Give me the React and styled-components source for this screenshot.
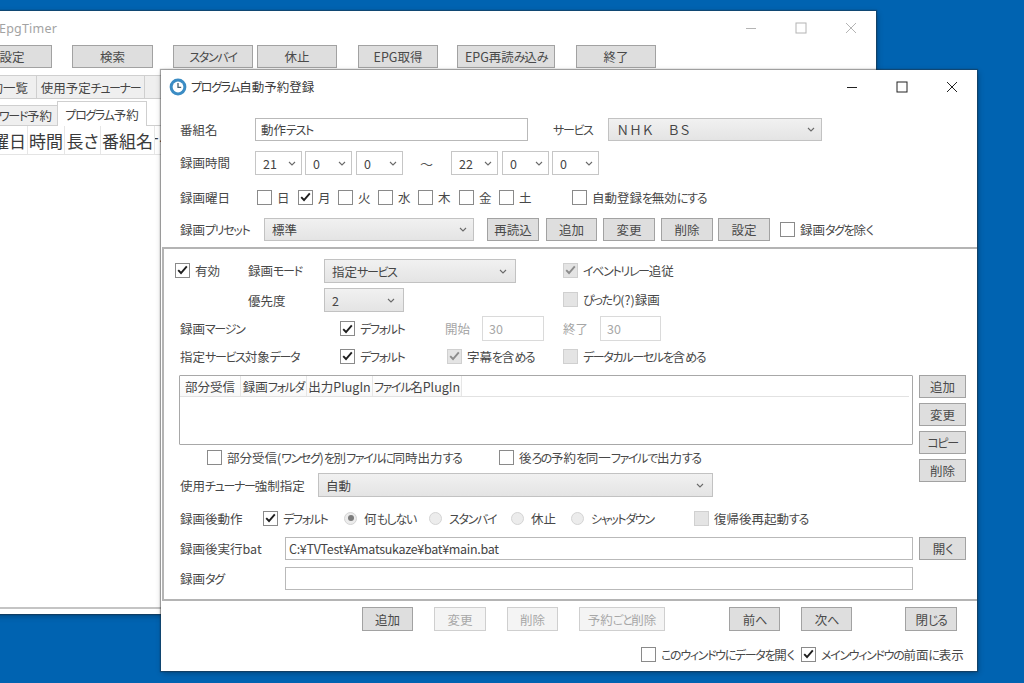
import React from 'react';
import styled, { createGlobalStyle } from 'styled-components';

const Global = createGlobalStyle`
  html, body { margin: 0; padding: 0; width: 1024px; height: 683px; overflow: hidden; background: #0063b1; }
  #root { width: 1024px; height: 683px; }
  * { box-sizing: border-box; }
`;

const Desktop = styled.div`
  position: relative;
  width: 1024px;
  height: 683px;
  overflow: hidden;
  background: #0063b1;
  font-family: "Noto Sans CJK JP", "Noto Sans", sans-serif;
  font-feature-settings: "palt" 1;
  font-size: 12.5px;
  color: #444;
`;

/* Kana run: narrower than the kanji around it, as in the UI font of the screenshot */
const K = styled.span`
  font-size: 0.96em;
  letter-spacing: -0.11em;
`;

const Window = styled.div`
  position: absolute;
  left: ${p => p.$x}px;
  top: ${p => p.$y}px;
  width: ${p => p.$w}px;
  height: ${p => p.$h}px;
  background: #fff;
  display: flex;
  flex-direction: column;
  box-shadow: 0 0 1px 1px rgba(40, 40, 40, 0.4), 1px 2px 6px rgba(0, 0, 0, 0.3);
`;

const TitleBar = styled.div`
  flex: none;
  height: ${p => p.$h}px;
  display: flex;
  align-items: center;
  padding-left: ${p => p.$pl}px;
`;

const AppTitle = styled.span`
  font-family: "Noto Sans", sans-serif;
  font-size: 12.5px;
  color: #a3a3a3;
  letter-spacing: 0.2px;
`;

const DialogTitle = styled.span`
  font-size: 12.5px;
  margin-left: 4px;
  color: #3a3a3a;
`;

const Controls = styled.div`
  margin-left: auto;
  display: flex;
  color: ${p => (p.$dim ? '#b4b4b4' : '#222')};
`;

const ControlCell = styled.div`
  width: 50px;
  height: 24px;
  display: flex;
  align-items: center;
  justify-content: center;
`;

const Row = styled.div`
  flex: none;
  display: flex;
  align-items: center;
  height: ${p => p.$h}px;
  margin-top: ${p => p.$mt || 0}px;
  padding-left: ${p => p.$pl || 0}px;
`;

const Label = styled.span`
  flex: none;
  width: ${p => (p.$w ? `${p.$w}px` : 'auto')};
  margin-left: ${p => p.$ml || 0}px;
  margin-bottom: ${p => (p.$up ? 2 : 0)}px;
  white-space: nowrap;
  color: ${p => (p.$muted ? '#a6a6a6' : '#484848')};
`;

const Wave = styled.span`
  flex: none;
  width: 31px;
  margin-left: 17px;
  font-size: 13px;
  color: #555;
`;

const Button = styled.div`
  flex: none;
  width: ${p => p.$w}px;
  height: ${p => p.$h || 23}px;
  margin-left: ${p => p.$ml || 0}px;
  margin-top: ${p => p.$mt || 0}px;
  display: flex;
  align-items: center;
  justify-content: center;
  white-space: nowrap;
  background: ${p => (p.$off ? '#f4f4f4' : '#dedede')};
  border: 1px solid ${p => (p.$off ? '#cfcfcf' : '#a2a2a2')};
  color: ${p => (p.$off ? '#a8a8a8' : '#4a4a4a')};
`;

const Field = styled.div`
  flex: none;
  width: ${p => p.$w}px;
  height: ${p => p.$h || 23}px;
  display: flex;
  align-items: center;
  padding-left: ${p => p.$pad || 6}px;
  letter-spacing: ${p => p.$ls || 0}px;
  background: #fff;
  white-space: pre;
  border: 1px solid ${p => (p.$off ? '#dadada' : '#b9b9b9')};
  color: ${p => (p.$off ? '#a8a8a8' : '#444')};
`;

const Combo = styled.div`
  flex: none;
  width: ${p => p.$w}px;
  height: ${p => p.$h || 24}px;
  margin-left: ${p => p.$ml || 0}px;
  letter-spacing: ${p => p.$ls || 0}px;
  display: flex;
  align-items: center;
  justify-content: space-between;
  padding: 0 ${p => p.$pr || 8}px 0 ${p => p.$pad || 7}px;
  white-space: pre;
  background: ${p => (p.$edit ? '#fff' : 'linear-gradient(#f1f1f1, #e4e4e4)')};
  border: 1px solid ${p => (p.$edit ? '#c6c6c6' : '#c2c2c2')};
  color: #454545;
`;

const Chevron = () => (
  <svg width="8" height="5" viewBox="0 0 8 5" fill="none" stroke="#6a6a6a" strokeWidth="1.1">
    <path d="M1 1 L4 4 L7 1" />
  </svg>
);

const Select = ({ children, ...rest }) => (
  <Combo {...rest}>
    <span>{children}</span>
    <Chevron />
  </Combo>
);

const CheckWrap = styled.span`
  flex: none;
  display: flex;
  align-items: center;
  width: ${p => (p.$w ? `${p.$w}px` : 'auto')};
  margin-left: ${p => p.$ml || 0}px;
  margin-bottom: ${p => (p.$up ? 2 : 0)}px;
  white-space: nowrap;
  color: #484848;
`;

const Box = styled.span`
  flex: none;
  width: 15px;
  height: 15px;
  margin-right: 5px;
  display: flex;
  align-items: center;
  justify-content: center;
  background: ${p => (p.$off ? '#e4e4e4' : '#fff')};
  border: 1px solid ${p => (p.$off ? '#d0d0d0' : '#8a8a8a')};
`;

const Check = ({ on, off, w, ml, up, children }) => (
  <CheckWrap $w={w} $ml={ml} $up={up}>
    <Box $off={off}>
      {on && (
        <svg width="11" height="10" viewBox="0 0 11 10" fill="none" stroke={off ? '#8c8c8c' : '#1e1e1e'} strokeWidth="1.9">
          <path d="M1.2 5.2 L4 8 L9.8 1.3" />
        </svg>
      )}
    </Box>
    <span>{children}</span>
  </CheckWrap>
);

const Dot = styled.span`
  flex: none;
  width: 13px;
  height: 13px;
  margin-right: 7px;
  border-radius: 50%;
  display: flex;
  align-items: center;
  justify-content: center;
  background: #ececec;
  border: 1px solid #d4d4d4;
  &::after {
    content: '';
    display: ${p => (p.$on ? 'block' : 'none')};
    width: 6px;
    height: 6px;
    border-radius: 50%;
    background: #7c7c7c;
  }
`;

const Radio = ({ on, w, children }) => (
  <CheckWrap $w={w}>
    <Dot $on={on} />
    <span>{children}</span>
  </CheckWrap>
);

const Panel = styled.div`
  flex: none;
  height: 354px;
  margin-top: 6px;
  margin-left: 1px;
  border: 2px solid #b4b4b4;
  border-right: none;
  display: flex;
  flex-direction: column;
`;

const ListBlock = styled.div`
  flex: none;
  display: flex;
  margin-top: 9px;
  padding-left: 15px;
`;

const ListColumn = styled.div`
  flex: none;
  width: 734px;
  display: flex;
  flex-direction: column;
`;

const ButtonColumn = styled.div`
  flex: none;
  width: 47px;
  margin-left: 6px;
  display: flex;
  flex-direction: column;
`;

const ListBox = styled.div`
  flex: none;
  height: 70px;
  border: 1px solid #a8a8a8;
  border-radius: 1px;
`;

const ListHeader = styled.div`
  display: flex;
  height: 21px;
  border-bottom: 1px solid #e2e2e2;
  margin-right: 3px;
`;

const ListCol = styled.div`
  flex: none;
  width: ${p => p.$w}px;
  display: flex;
  align-items: center;
  justify-content: center;
  white-space: nowrap;
  border-right: 1px solid #e6e6e6;
  background: linear-gradient(#fff, #f8f8f8);
`;

const TabStrip = styled.div`
  flex: none;
  display: flex;
  align-items: flex-end;
  height: ${p => p.$h}px;
  margin-top: ${p => p.$mt || 0}px;
  border-bottom: 1px solid #cfcfcf;
`;

const Tab = styled.div`
  flex: none;
  width: ${p => p.$w}px;
  height: ${p => p.$th}px;
  margin-left: -1px;
  margin-bottom: ${p => (p.$on ? '-1px' : '0')};
  display: flex;
  align-items: center;
  justify-content: ${p => (p.$end ? 'flex-end' : 'center')};
  padding-right: ${p => p.$end || 0}px;
  white-space: nowrap;
  background: ${p => (p.$on ? '#fff' : '#efefef')};
  border: 1px solid #cfcfcf;
  border-bottom: none;
`;

const TabBody = styled.div`
  flex: 1;
  min-height: 0;
  border-bottom: 2px solid #c4c4c4;
  margin-bottom: 5px;
`;

const TableHead = styled.div`
  display: flex;
  height: 29px;
  border-bottom: 1px solid #e4e4e4;
`;

const HeadCell = styled.div`
  flex: none;
  width: ${p => p.$w}px;
  display: flex;
  align-items: center;
  justify-content: ${p => (p.$end ? 'flex-end' : 'center')};
  padding-right: ${p => (p.$end ? 1 : 0)}px;
  font-size: 17px;
  white-space: nowrap;
  overflow: hidden;
  border-right: 1px solid #e6e6e6;
  color: #3a3a3a;
`;

const WinIcon = ({ kind }) => (
  <svg width="12" height="12" viewBox="0 0 12 12" fill="none" stroke="currentColor" strokeWidth="1">
    {kind === 'min' && <path d="M1 6.5 H11" />}
    {kind === 'max' && <rect x="1" y="1" width="10" height="10" />}
    {kind === 'close' && <path d="M1 1 L11 11 M11 1 L1 11" />}
  </svg>
);

const WinControls = ({ dim }) => (
  <Controls $dim={dim}>
    <ControlCell><WinIcon kind="min" /></ControlCell>
    <ControlCell><WinIcon kind="max" /></ControlCell>
    <ControlCell><WinIcon kind="close" /></ControlCell>
  </Controls>
);

const ClockIcon = () => (
  <svg width="18" height="18" viewBox="0 0 18 18">
    <circle cx="9" cy="9" r="8.4" fill="#3b8cc4" />
    <circle cx="9" cy="9" r="5.4" fill="#fff" />
    <path d="M9 5 V9.3 H12.2" fill="none" stroke="#46606f" strokeWidth="1.3" />
  </svg>
);

export default function App() {
  return (
    <Desktop>
      <Global />

      <Window $x={-40} $y={11} $w={916} $h={603}>
        <TitleBar $h={34} $pl={39}>
          <AppTitle>EpgTimer</AppTitle>
          <WinControls dim />
        </TitleBar>
        <Row $h={23} $pl={12}>
          <Button $w={80}>設定</Button>
          <Button $w={81} $ml={20}>検索</Button>
          <Button $w={80} $ml={20}><K>スタンバイ</K></Button>
          <Button $w={80} $ml={4}>休止</Button>
          <Button $w={80} $ml={21}>EPG取得</Button>
          <Button $w={98} $ml={19}>EPG再読<K>み</K>込<K>み</K></Button>
          <Button $w={80} $ml={21}>終了</Button>
        </Row>
        <TabStrip $h={24} $mt={7}>
          <Tab $w={78} $th={23} $end={8}>予約一覧</Tab>
          <Tab $w={109} $th={23}>使用予定<K>チューナー</K></Tab>
          <Tab $w={110} $th={23}>録画済<K>み</K>一覧</Tab>
        </TabStrip>
        <TabStrip $h={26} $mt={1}>
          <Tab $w={99} $th={20} $end={5}><K>キーワード</K>予約</Tab>
          <Tab $w={90} $th={25} $on><K>プログラム</K>予約</Tab>
        </TabStrip>
        <TabBody>
          <TableHead>
            <HeadCell $w={68} $end>曜日</HeadCell>
            <HeadCell $w={37}>時間</HeadCell>
            <HeadCell $w={36}>長さ</HeadCell>
            <HeadCell $w={54}>番組名</HeadCell>
            <HeadCell $w={40}>サービス</HeadCell>
          </TableHead>
        </TabBody>
      </Window>

      <Window $x={161} $y={70} $w={816} $h={601}>
        <TitleBar $h={33} $pl={8}>
          <ClockIcon />
          <DialogTitle><K>プログラム</K>自動予約登録</DialogTitle>
          <WinControls />
        </TitleBar>

        <Row $h={23} $mt={15} $pl={19}>
          <Label $w={75}>番組名</Label>
          <Field $w={273} $pad={5}>動作<K>テスト</K></Field>
          <Label $w={55} $ml={25}><K>サービス</K></Label>
          <Select $w={214} $h={23} $pad={8} $pr={6} $ls={1.6}>ＮＨＫ　ＢＳ</Select>
        </Row>

        <Row $h={24} $mt={10} $pl={19}>
          <Label $w={75} $up>録画時間</Label>
          <Select $w={47} $edit $pr={5}>21</Select>
          <Select $w={47} $ml={3} $edit $pr={5}>0</Select>
          <Select $w={47} $ml={4} $edit $pr={5}>0</Select>
          <Wave>〜</Wave>
          <Select $w={47} $edit $pr={5}>22</Select>
          <Select $w={47} $ml={4} $edit $pr={5}>0</Select>
          <Select $w={47} $ml={3} $edit $pr={5}>0</Select>
        </Row>

        <Row $h={22} $mt={11} $pl={19}>
          <Label $w={77}>録画曜日</Label>
          <Check w={41}>日</Check>
          <Check w={40} on>月</Check>
          <Check w={40}>火</Check>
          <Check w={40}>水</Check>
          <Check w={41}>木</Check>
          <Check w={40}>金</Check>
          <Check w={40}>土</Check>
          <Check ml={33}>自動登録<K>を</K>無効<K>にする</K></Check>
        </Row>

        <Row $h={23} $mt={10} $pl={19}>
          <Label $w={84}>録画<K>プリセット</K></Label>
          <Select $w={210} $h={23} $pr={6}>標準</Select>
          <Button $w={52} $ml={13}>再読込</Button>
          <Button $w={51} $ml={7}>追加</Button>
          <Button $w={52} $ml={6}>変更</Button>
          <Button $w={52} $ml={6}>削除</Button>
          <Button $w={52} $ml={5}>設定</Button>
          <Check ml={10}>録画<K>タグを</K>除<K>く</K></Check>
        </Row>

        <Panel>
          <Row $h={24} $mt={10} $pl={11}>
            <Check w={73} on up>有効</Check>
            <Label $w={76} $up>録画<K>モード</K></Label>
            <Select $w={192}>指定<K>サービス</K></Select>
            <Check ml={47} on off up><K>イベントリレー</K>追従</Check>
          </Row>
          <Row $h={24} $mt={5} $pl={84}>
            <Label $w={76}>優先度</Label>
            <Select $w={80}>2</Select>
            <Check ml={159} off up><K>ぴったり</K>(?)録画</Check>
          </Row>
          <Row $h={25} $mt={4} $pl={16}>
            <Label $w={160}>録画<K>マージン</K></Label>
            <Check w={105} on><K>デフォルト</K></Check>
            <Label $w={37} $muted>開始</Label>
            <Field $w={62} $h={25} $off>30</Field>
            <Label $w={37} $ml={19} $muted>終了</Label>
            <Field $w={61} $h={25} $off>30</Field>
          </Row>
          <Row $h={20} $mt={5} $pl={16}>
            <Label $w={160}>指定<K>サービス</K>対象<K>データ</K></Label>
            <Check w={107} on><K>デフォルト</K></Check>
            <Check w={116} on off>字幕<K>を</K>含<K>める</K></Check>
            <Check off><K>データカルーセルを</K>含<K>める</K></Check>
          </Row>

          <ListBlock>
            <ListColumn>
              <ListBox>
                <ListHeader>
                  <ListCol $w={61}>部分受信</ListCol>
                  <ListCol $w={66}>録画<K>フォルダ</K></ListCol>
                  <ListCol $w={66}>出力PlugIn</ListCol>
                  <ListCol $w={89}><K>ファイル</K>名PlugIn</ListCol>
                </ListHeader>
              </ListBox>
              <Row $h={20} $mt={2} $pl={28}>
                <Check w={292}>部分受信(<K>ワンセグ</K>)<K>を</K>別<K>ファイルに</K>同時出力<K>する</K></Check>
                <Check>後<K>ろの</K>予約<K>を</K>同一<K>ファイルで</K>出力<K>する</K></Check>
              </Row>
              <Row $h={24} $mt={6} $pl={1}>
                <Label $w={138}>使用<K>チューナー</K>強制指定</Label>
                <Select $w={395}>自動</Select>
              </Row>
            </ListColumn>
            <ButtonColumn>
              <Button $w={47}>追加</Button>
              <Button $w={47} $mt={5}>変更</Button>
              <Button $w={47} $mt={5}><K>コピー</K></Button>
              <Button $w={47} $mt={5}>削除</Button>
            </ButtonColumn>
          </ListBlock>

          <Row $h={20} $mt={11} $pl={16}>
            <Label $w={83}>録画後動作</Label>
            <Check w={81} on><K>デフォルト</K></Check>
            <Radio w={85} on>何<K>もしない</K></Radio>
            <Radio w={82}><K>スタンバイ</K></Radio>
            <Radio w={60}>休止</Radio>
            <Radio w={123}><K>シャットダウン</K></Radio>
            <Check off>復帰後再起動<K>する</K></Check>
          </Row>
          <Row $h={23} $mt={9} $pl={16}>
            <Label $w={105}>録画後実行bat</Label>
            <Field $w={628} $pad={3} $ls={-0.3}>C:¥TVTest¥Amatsukaze¥bat¥main.bat</Field>
            <Button $w={47} $ml={6}>開<K>く</K></Button>
          </Row>
          <Row $h={23} $mt={7} $pl={16}>
            <Label $w={105}>録画<K>タグ</K></Label>
            <Field $w={628} />
          </Row>
        </Panel>

        <Row $h={24} $mt={6} $pl={201}>
          <Button $w={51} $h={24}>追加</Button>
          <Button $w={52} $h={24} $ml={21} $off>変更</Button>
          <Button $w={51} $h={24} $ml={21} $off>削除</Button>
          <Button $w={86} $h={24} $ml={21} $off>予約<K>ごと</K>削除</Button>
          <Button $w={51} $h={24} $ml={64}>前<K>へ</K></Button>
          <Button $w={51} $h={24} $ml={21}>次<K>へ</K></Button>
          <Button $w={52} $h={24} $ml={53}>閉<K>じる</K></Button>
        </Row>
        <Row $h={20} $mt={13} $pl={480}>
          <Check w={160}><K>このウィンドウにデータを</K>開<K>く</K></Check>
          <Check on><K>メインウィンドウの</K>前面<K>に</K>表示</Check>
        </Row>
      </Window>
    </Desktop>
  );
}
